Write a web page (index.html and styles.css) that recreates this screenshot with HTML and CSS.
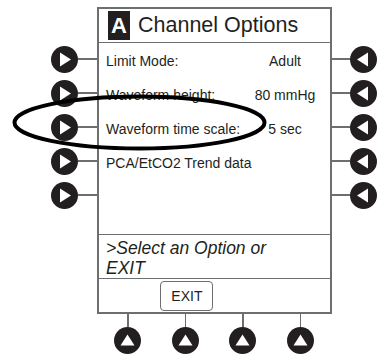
FILE: index.html
```html
<!DOCTYPE html>
<html>
<head>
    <title>Channel Options</title>
    <link rel="stylesheet" href="styles.css">
</head>
<body>
    <div class="device">
        <div class="top">
            <div class="side left">
                <div class="key"><svg class="btn" viewBox="0 0 27 27"><circle cx="13.5" cy="13.5" r="13.5"/><polygon points="9,6.5 9,20.5 20,13.5"/></svg><span class="wire"></span></div>
                <div class="key"><svg class="btn" viewBox="0 0 27 27"><circle cx="13.5" cy="13.5" r="13.5"/><polygon points="9,6.5 9,20.5 20,13.5"/></svg><span class="wire"></span></div>
                <div class="key"><svg class="btn" viewBox="0 0 27 27"><circle cx="13.5" cy="13.5" r="13.5"/><polygon points="9,6.5 9,20.5 20,13.5"/></svg><span class="wire"></span></div>
                <div class="key"><svg class="btn" viewBox="0 0 27 27"><circle cx="13.5" cy="13.5" r="13.5"/><polygon points="9,6.5 9,20.5 20,13.5"/></svg><span class="wire"></span></div>
                <div class="key"><svg class="btn" viewBox="0 0 27 27"><circle cx="13.5" cy="13.5" r="13.5"/><polygon points="9,6.5 9,20.5 20,13.5"/></svg><span class="wire"></span></div>
            </div>

            <div class="screen">
                <div class="title">
                    <span class="chan">A</span>
                    <span class="title-text">Channel Options</span>
                </div>
                <div class="options">
                    <div class="row"><span class="label">Limit Mode:</span><span class="value">Adult</span></div>
                    <div class="row"><span class="label">Waveform height:</span><span class="value">80 mmHg</span></div>
                    <div class="row"><span class="label">Waveform time scale:</span><span class="value">5 sec</span></div>
                    <div class="row"><span class="label">PCA/EtCO2 Trend data</span></div>
                    <div class="row"></div>
                </div>
                <div class="message">&gt;Select an Option or<br>EXIT</div>
                <div class="softkeys">
                    <span class="softkey"></span>
                    <span class="softkey"><button class="exit">EXIT</button></span>
                    <span class="softkey"></span>
                    <span class="softkey"></span>
                </div>
            </div>

            <div class="side right">
                <div class="key"><span class="wire"></span><svg class="btn" viewBox="0 0 27 27"><circle cx="13.5" cy="13.5" r="13.5"/><polygon points="18,6.5 18,20.5 7,13.5"/></svg></div>
                <div class="key"><span class="wire"></span><svg class="btn" viewBox="0 0 27 27"><circle cx="13.5" cy="13.5" r="13.5"/><polygon points="18,6.5 18,20.5 7,13.5"/></svg></div>
                <div class="key"><span class="wire"></span><svg class="btn" viewBox="0 0 27 27"><circle cx="13.5" cy="13.5" r="13.5"/><polygon points="18,6.5 18,20.5 7,13.5"/></svg></div>
                <div class="key"><span class="wire"></span><svg class="btn" viewBox="0 0 27 27"><circle cx="13.5" cy="13.5" r="13.5"/><polygon points="18,6.5 18,20.5 7,13.5"/></svg></div>
                <div class="key"><span class="wire"></span><svg class="btn" viewBox="0 0 27 27"><circle cx="13.5" cy="13.5" r="13.5"/><polygon points="18,6.5 18,20.5 7,13.5"/></svg></div>
            </div>
        </div>

        <div class="bottom">
            <div class="bkey"><span class="vwire"></span><svg class="btn" viewBox="0 0 27 27"><circle cx="13.5" cy="13.5" r="13.5"/><polygon points="6.5,18.5 20.5,18.5 13.5,7.5"/></svg></div>
            <div class="bkey"><span class="vwire"></span><svg class="btn" viewBox="0 0 27 27"><circle cx="13.5" cy="13.5" r="13.5"/><polygon points="6.5,18.5 20.5,18.5 13.5,7.5"/></svg></div>
            <div class="bkey"><span class="vwire"></span><svg class="btn" viewBox="0 0 27 27"><circle cx="13.5" cy="13.5" r="13.5"/><polygon points="6.5,18.5 20.5,18.5 13.5,7.5"/></svg></div>
            <div class="bkey"><span class="vwire"></span><svg class="btn" viewBox="0 0 27 27"><circle cx="13.5" cy="13.5" r="13.5"/><polygon points="6.5,18.5 20.5,18.5 13.5,7.5"/></svg></div>
        </div>

        <!-- callout ring round the time scale option -->
        <svg class="ring" viewBox="0 0 377 354"><ellipse cx="139.5" cy="122.5" rx="125" ry="26"/></svg>
    </div>
</body>
</html>
```

FILE: styles.css
```css
body {
    margin: 0;
    background-color: #ffffff;
    font-family: "Liberation Sans", Arial, sans-serif;
    color: #231f20;
}
.device {
    position: relative;
    width: 377px;
    height: 354px;
    overflow: hidden;
}
.top {
    display: flex;
    padding-top: 7px;
}
.side {
    display: flex;
    flex-direction: column;
    padding-top: 35px;
}
.side.left {
    width: 97px;
    padding-left: 51px;
    box-sizing: border-box;
}
.side.right {
    width: 45px;
}
.key {
    display: flex;
    align-items: center;
    height: 34px;
}
.wire {
    flex: 1;
    height: 1.5px;
    background-color: #6d6e70;
}
.btn {
    width: 27px;
    height: 27px;
    flex: none;
}
.btn circle {
    fill: #231f20;
}
.btn polygon {
    fill: #ffffff;
}
.screen {
    width: 235px;
    height: 307px;
    box-sizing: border-box;
    border: 2px solid #6d6e70;
    display: flex;
    flex-direction: column;
}
.title {
    height: 33px;
    border-bottom: 1.5px solid #6d6e70;
    display: flex;
    align-items: center;
    padding-left: 9px;
}
.chan {
    width: 22px;
    height: 29px;
    background-color: #231f20;
    color: #ffffff;
    font-weight: bold;
    font-size: 22px;
    line-height: 29px;
    text-align: center;
}
.title-text {
    font-size: 21.5px;
    margin-left: 8px;
}
.options {
    height: 191px;
    border-bottom: 1.5px solid #6d6e70;
}
.row {
    height: 34px;
    display: flex;
    align-items: center;
    padding: 2px 6px 0 7px;
    box-sizing: border-box;
    font-size: 14px;
}
.label {
    flex: 1;
}
.value {
    width: 78px;
    text-align: center;
}
.message {
    height: 44px;
    border-bottom: 1.5px solid #6d6e70;
    padding: 3px 0 0 7px;
    box-sizing: border-box;
    font-size: 17.5px;
    font-style: italic;
    line-height: 20px;
}
.softkeys {
    flex: 1;
    display: flex;
    padding-left: 2px;
}
.softkey {
    width: 57.5px;
    display: flex;
    justify-content: center;
    align-items: center;
}
.exit {
    width: 53px;
    height: 30px;
    margin-top: 1px;
    border: 1.5px solid #6d6e70;
    border-radius: 4px;
    background-color: #ffffff;
    font-family: "Liberation Sans", Arial, sans-serif;
    font-size: 14px;
    color: #231f20;
    padding: 0;
}
.bottom {
    display: flex;
    margin-left: 99px;
}
.bkey {
    width: 57.5px;
    display: flex;
    flex-direction: column;
    align-items: center;
}
.vwire {
    width: 1.5px;
    height: 13px;
    background-color: #6d6e70;
}
.ring {
    position: absolute;
    left: 0;
    top: 0;
    width: 377px;
    height: 354px;
}
.ring ellipse {
    fill: none;
    stroke: #000000;
    stroke-width: 4;
}
```
